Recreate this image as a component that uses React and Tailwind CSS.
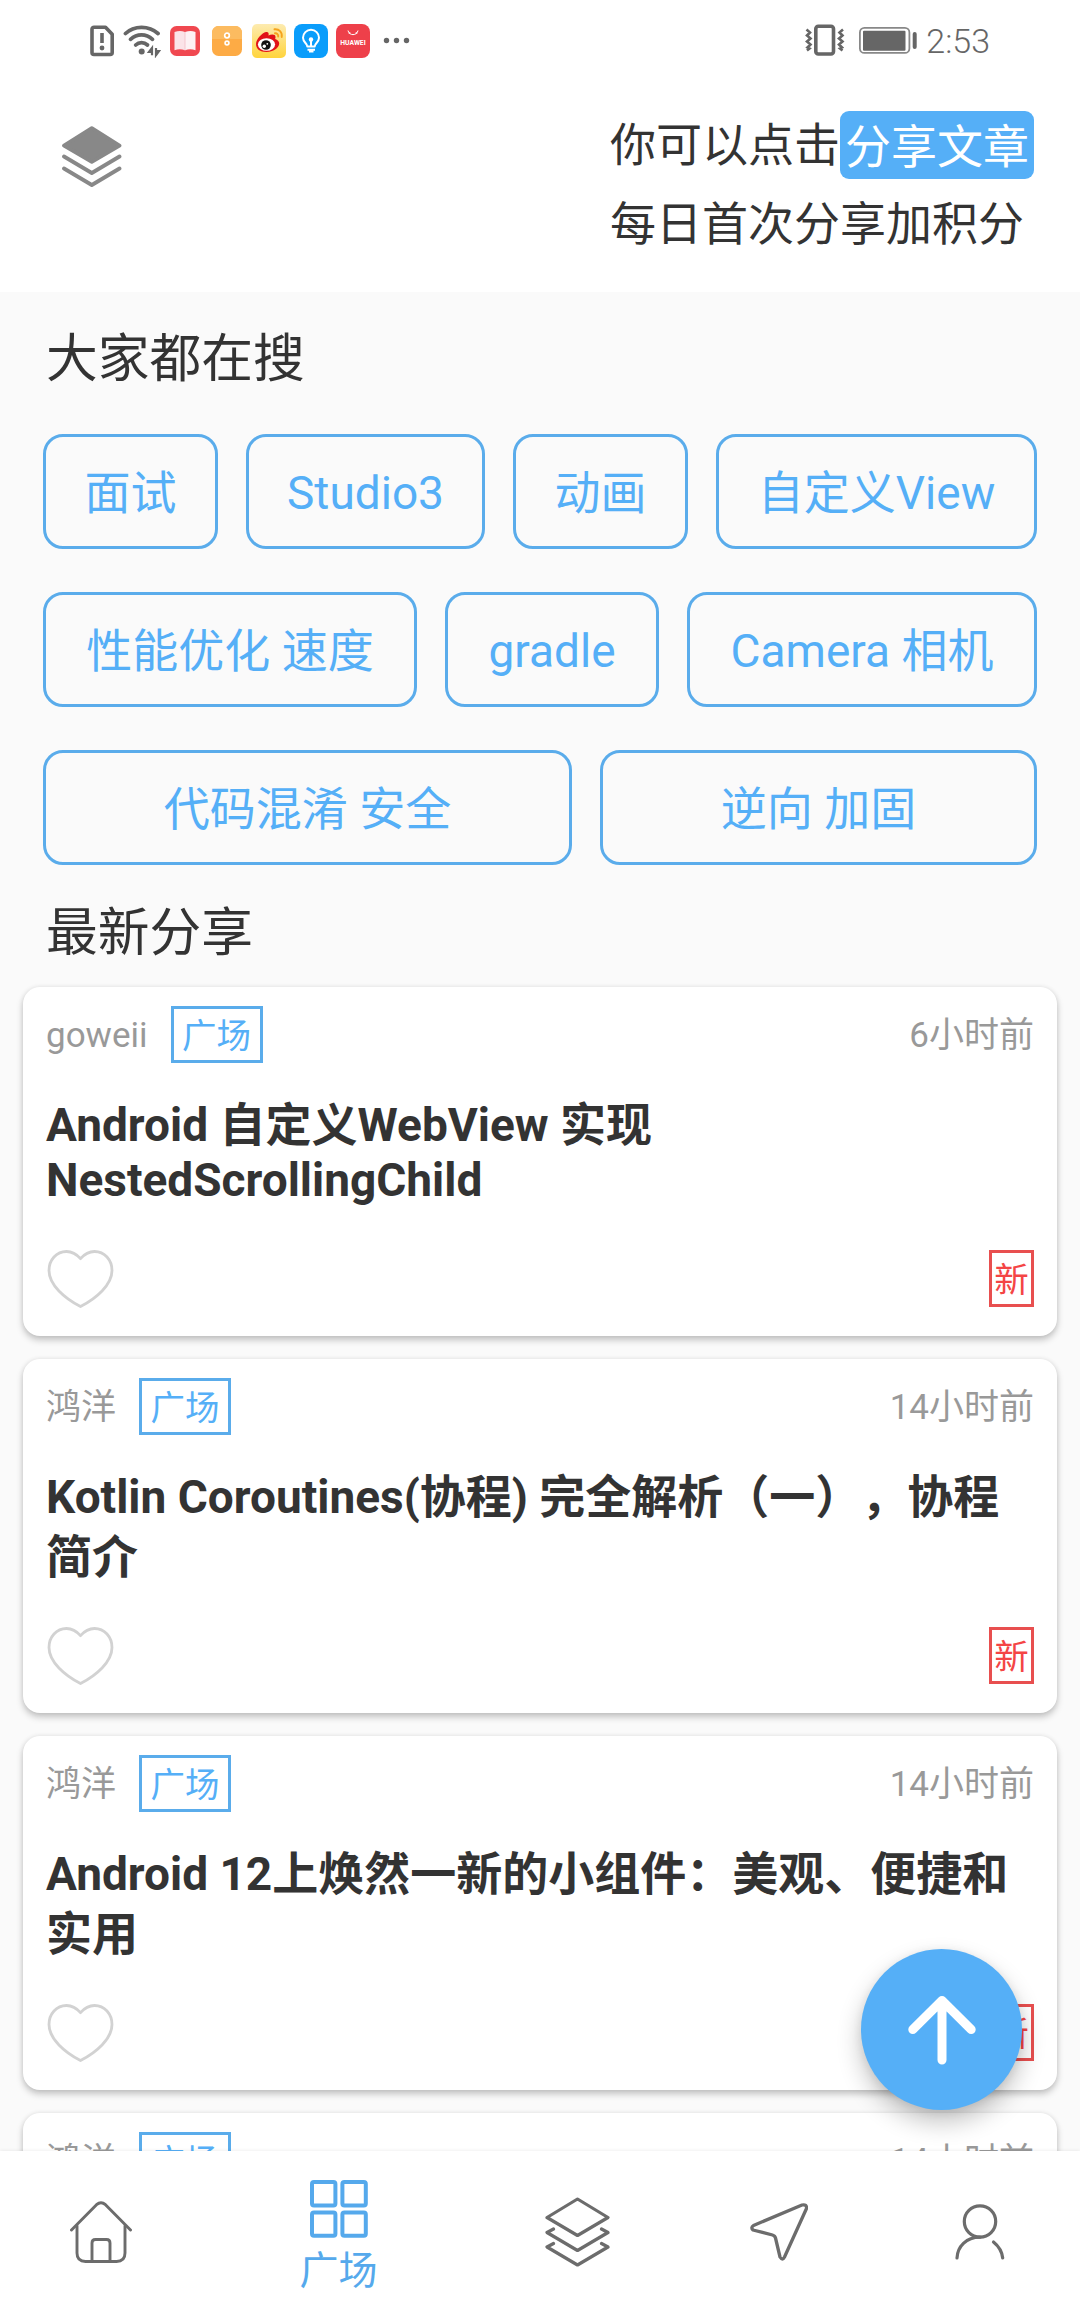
import clsx from "clsx";

const hotKeys = [
  [
    { name: '面试', width: 'w-[175px]' },
    { name: 'Studio3', width: 'w-[239px]' },
    { name: '动画', width: 'w-[175px]' },
    { name: '自定义View', width: 'w-[321px]' },
  ],
  [
    { name: '性能优化 速度', width: 'w-[374px]' },
    { name: 'gradle', width: 'w-[214px]' },
    { name: 'Camera 相机', width: 'w-[350px]' },
  ],
  [
    { name: '代码混淆 安全', width: 'w-[529px]' },
    { name: '逆向 加固', width: 'w-[437px]' },
  ],
];

const articles = [
  {
    id: 1,
    author: 'goweii',
    time: '6小时前',
    title: ['Android 自定义WebView 实现', 'NestedScrollingChild'],
    compact: true,
  },
  {
    id: 2,
    author: '鸿洋',
    time: '14小时前',
    title: ['Kotlin Coroutines(协程) 完全解析（一），协程', '简介'],
  },
  {
    id: 3,
    author: '鸿洋',
    time: '14小时前',
    title: ['Android 12上焕然一新的小组件：美观、便捷和', '实用'],
  },
  { id: 4, author: '鸿洋', time: '14小时前', title: ['', ''] },
];

const StatusBar = () => (
  <div className="flex h-20 shrink-0 items-start justify-between pl-[90px] pr-[90px] pt-6 text-[#666]">
    <div className="flex h-[34px] items-center">
      <svg className="h-[34px] w-6" viewBox="0 0 24 34" fill="none" stroke="currentColor" strokeWidth="3.6">
        <path d="M4 3.3h11.5l6.7 7v18.2a2 2 0 0 1-2 2H4a2 2 0 0 1-2-2V5.300a2 2 0 0 1 2-2z" strokeLinejoin="round" />
        <path d="M12 9v10" />
        <circle cx="12" cy="24" r="2.4" fill="currentColor" stroke="none" />
      </svg>
      <svg className="ml-[9px] h-[34px] w-[38px]" viewBox="0 0 38 34" fill="none" stroke="currentColor" strokeWidth="3.8" strokeLinecap="round">
        <path d="M2.500 9.500C11 1.300 26 1.300 35 9.500" />
        <path d="M7.500 15.300C14 9.500 23 9.500 29.500 15.300" />
        <path d="M12.700 21C16 17.800 21 17.800 24.500 21" />
        <circle cx="18.700" cy="27.500" r="3" fill="currentColor" stroke="none" />
        <path d="M29 24v7.200V24l-3 4h3M33 31.200V24v7.200l3-4H33" strokeWidth="2.200" />
      </svg>
      <svg className="ml-[9px] size-[30px]" viewBox="0 0 30 30">
        <rect width="30" height="30" rx="6.500" fill="#f04850" />
        <path d="M4.500 6c4-1.500 7-1.500 10.500 0v18.300c-3.500-1.500-7-1.500-10.500 0z" fill="#fbe3e8" />
        <path d="M15 6c4-1.500 7-1.500 10.500 0v18.300c-3.500-1.500-7-1.500-10.500 0z" fill="#fdf1f4" />
        <path d="M15 6v18.300" stroke="#f3bcc6" strokeWidth=".8" />
      </svg>
      <svg className="ml-3 size-[30px]" viewBox="0 0 30 30">
        <rect width="30" height="30" rx="6.500" fill="#fdab45" />
        <path d="M0 13V6.500A6.500 6.500 0 0 1 6.500 0h17A6.500 6.500 0 0 1 30 6.500V13z" fill="#fcbb60" />
        <circle cx="15" cy="9.500" r="2.300" fill="#fdab45" stroke="#fff" strokeWidth="1.700" />
        <circle cx="15" cy="17" r="1.900" fill="#fdab45" stroke="#fff" strokeWidth="1.700" />
      </svg>
      <svg className="ml-2.5 size-[34px]" viewBox="0 0 34 34">
        <defs>
          <linearGradient id="weibo" x1="0" y1="0" x2="0" y2="1">
            <stop offset="0" stopColor="#fdebb0" />
            <stop offset="1" stopColor="#ffd43c" />
          </linearGradient>
        </defs>
        <rect width="34" height="34" rx="5" fill="url(#weibo)" />
        <path d="M4 20c0-5 6-11 10-12 2.500-.4 3 1.500 2.500 3.500 3-1.500 7-1.500 7 1.500 0 1 -.3 1.500-.3 2 2.300.8 4 2.300 4 4.500C27 24 21 28 14.500 28S4 25 4 20z" fill="#e11218" />
        <ellipse cx="14.500" cy="20.500" rx="8.600" ry="6.300" fill="#fff" />
        <circle cx="14" cy="21" r="4.800" fill="#111" />
        <circle cx="12.300" cy="22.300" r="1.700" fill="#fff" />
        <circle cx="15.300" cy="19.800" r=".9" fill="#fff" />
        <path d="M22.500 5.300c4.500-.5 8 3 7.200 7.700M23 9.300c2-.2 3.500 1.300 3.200 3.300" fill="none" stroke="#f5a31c" strokeWidth="1.900" strokeLinecap="round" />
      </svg>
      <svg className="ml-2 size-[34px]" viewBox="0 0 34 34" fill="none" stroke="#fff" strokeWidth="2">
        <rect width="34" height="34" rx="8" fill="#0a9dfb" stroke="none" />
        <path d="M13.300 22.500c0-3-4.300-4.300-4.300-8.700a8 8 0 0 1 16 0c0 4.400-4.300 5.700-4.300 8.700z" strokeLinejoin="round" />
        <path d="M13.500 25.800h7.500M17 15v7" />
        <path d="M15 27.300h4.500" strokeWidth="2.400" />
        <circle cx="17" cy="15.500" r="2.200" fill="#fff" stroke="none" />
      </svg>
      <div className="ml-2 flex size-[34px] flex-col items-center rounded-[8px] bg-[#ee404a]">
        <svg className="mt-[6px] h-[6px] w-3" viewBox="0 0 12 6" fill="none" stroke="#fff" strokeWidth="1">
          <path d="M1 .5C2 6 10 6 11 .5M3 2l-1 2M9 2l1 2" />
        </svg>
        <span className="mt-[3px] text-[6.800px] leading-[9px] font-bold text-white">HUAWEI</span>
      </div>
      <svg className="ml-[13px] h-[34px] w-7" viewBox="0 0 28 34" fill="currentColor">
        <circle cx="3.500" cy="16.500" r="2.700" />
        <circle cx="13.500" cy="16.500" r="2.700" />
        <circle cx="23.500" cy="16.500" r="2.700" />
      </svg>
    </div>
    <div className="flex h-[34px] items-center">
      <svg className="h-[34px] w-10" viewBox="0 0 40 34" fill="none" stroke="currentColor">
        <rect x="10.800" y="2.300" width="17.700" height="27.700" rx="2.500" strokeWidth="3.600" />
        <path d="M1.500 5.500l3.500 3-3 3 3.500 3-3.500 3 3.500 3-3 3 2 1-2.500 2M38 5.500l-3.500 3 3 3-3.500 3 3.500 3-3.500 3 3 3-2 1 2.500 2" strokeWidth="2.600" />
      </svg>
      <svg className="ml-[14px] h-[34px] w-[59px]" viewBox="0 0 59 34" fill="none">
        <rect x=".9" y="3.900" width="49.500" height="25" rx="4.500" stroke="#888" strokeWidth="1.800" />
        <rect x="4" y="6.700" width="42.500" height="20" rx="1" fill="currentColor" />
        <rect x="53.700" y="8" width="4" height="17" rx="2" fill="currentColor" />
      </svg>
      <span className="ml-[8px] text-[34px] leading-[34px] font-light">2:53</span>
    </div>
  </div>
);

const Header = () => (
  <div className="flex h-[212px] shrink-0 items-start justify-between pl-[62px] pr-[46px]">
    <svg className="mt-[46px] h-[62px] w-[60px]" viewBox="0 0 60 62" fill="none" stroke="#888" strokeWidth="3.800" strokeLinecap="round" strokeLinejoin="round">
      <path d="M29.800 2.200L57.500 19.700 29.800 35.800 2 19.700z" fill="#888" />
      <path d="M2 30.500l27.800 16.500 27.700-16.500" />
      <path d="M2 42.500l27.800 16.500L57.500 42.500" />
    </svg>
    <div className="mt-[31px] text-[46px]">
      <div className="flex h-[68px] items-center leading-[68px]">
        <span>你可以点击</span>
        <span className="h-[68px] rounded-[9px] bg-[#55aff7] px-[5px] pt-[3px] leading-[66px] text-white">分享文章</span>
      </div>
      <div className="mt-[11px] h-[68px] leading-[68px]">每日首次分享加积分</div>
    </div>
  </div>
);

const ArticleCard = ({ article }) => (
  <div
    className={clsx(
      'flex shrink-0 flex-col rounded-[17px] bg-white px-[23px] pt-[19px] pb-7 shadow-[0_4px_7px_rgba(0,0,0,0.22),0_0_5px_rgba(0,0,0,0.08)]',
      article.compact ? 'h-[349px]' : 'h-[354px]'
    )}
  >
    <div className="flex h-[57px] items-center text-[35px] leading-[57px] text-[#999]">
      <span className="pt-[2px]">{article.author}</span>
      <span className="ml-[23px] h-[57px] w-[92px] border-[3px] border-[#5aaceb] pt-[2px] text-center text-[34.5px] leading-[51px] text-[#55aff7]">
        广场
      </span>
      <span className="ml-auto pt-[2px]">{article.time}</span>
    </div>
    <div
      className={clsx(
        'text-[46px] font-bold whitespace-nowrap',
        article.compact ? 'mt-[35px] leading-[55px]' : 'mt-8 leading-[60px]'
      )}
    >
      {article.title.map((line, i) => (
        <div key={i}>{line}</div>
      ))}
    </div>
    <div className="mt-auto flex items-start justify-between">
      <svg className="ml-[1px] h-[58px] w-[67px]" viewBox="0 0 67 58" fill="none" stroke="#d2d2d2" strokeWidth="2.800" strokeLinejoin="round">
        <path d="M33.500 8.700C29 3.500 24 1.500 19.500 1.500 9.500 1.500 2 10 2 20.500 2 35 18 48.500 33.500 56.500 49 48.500 65 35 65 20.500 65 10 57.500 1.500 47.500 1.500 43 1.500 38 3.500 33.500 8.700z" />
      </svg>
      <span className="h-[57px] w-[45px] border-[3px] border-[#e84f4f] pt-[2px] text-center text-[34.5px] leading-[51px] text-[#f44545]">
        <span className="-mx-1">新</span>
      </span>
    </div>
  </div>
);

const TabBar = () => (
  <div className="relative flex h-[161px] shrink-0 bg-white text-[#6c6c6c] shadow-[0_-1px_3px_rgba(0,0,0,0.06)]">
    <div className="flex w-[201px] items-center justify-center">
      <svg className="h-[62px] w-[62px]" viewBox="0 0 62 62" fill="none" stroke="currentColor" strokeWidth="2.900" strokeLinecap="round" strokeLinejoin="round">
        <path d="M1.500 29L26.500 3.700q4.500-4 9 0L60.500 29" />
        <path d="M7 25v27q0 8.500 8.500 8.500h31q8.500 0 8.500-8.500V25" />
        <path d="M22 60V42q0-3.500 3.500-3.500h11q3.500 0 3.500 3.500v18" />
      </svg>
    </div>
    <div className="flex w-[275px] flex-col items-center pt-[29px] text-[#55a9ec]">
      <svg className="h-[58px] w-[58px]" viewBox="0 0 58 58" fill="none" stroke="currentColor" strokeWidth="4">
        <rect x="2" y="2" width="23.400" height="23.400" rx="2" />
        <rect x="32.400" y="2" width="23.400" height="23.400" rx="2" />
        <rect x="2" y="32.400" width="23.400" height="23.400" rx="2" />
        <rect x="32.400" y="32.400" width="23.400" height="23.400" rx="2" />
      </svg>
      <span className="mt-[10px] text-[39px] leading-[46px]">广场</span>
    </div>
    <div className="flex w-[202px] items-center justify-center">
      <svg className="h-[70px] w-[65px]" viewBox="0 0 65 70" fill="none" stroke="currentColor" strokeWidth="3.200" strokeLinejoin="round" strokeLinecap="round">
        <path d="M32.500 2L63 20.500 32.500 38.500 2 20.500z" />
        <path d="M8.500 32L2 35.500l30.500 18L63 35.500l-6.500-3.500" />
        <path d="M8.500 46.500L2 50l30.500 18L63 50l-6.500-3.500" />
      </svg>
    </div>
    <div className="flex w-[201px] items-center justify-center">
      <svg className="h-[58px] w-[58px]" viewBox="0 0 58 58" fill="none" stroke="currentColor" strokeWidth="3.300" strokeLinejoin="round">
        <path d="M3.500 22.500L52 2q5-1 4.500 3.500L34.500 54q-2 4-4.500 0L25.500 35q-.5-2.300-3-3L3 27q-2.500-2.300.5-4.500z" />
      </svg>
    </div>
    <div className="flex w-[201px] items-center justify-center">
      <svg className="h-[56px] w-[50px]" viewBox="0 0 50 56" fill="none" stroke="currentColor" strokeWidth="3.200" strokeLinecap="round">
        <ellipse cx="25" cy="17.500" rx="15.700" ry="15.700" />
        <path d="M25 33.200C11 33.200 2.500 42.500 2 54M38.500 38C44 42.500 47 47.500 47.700 54" />
      </svg>
    </div>
  </div>
);

const App = () => {
  return (
    <div
      lang="zh-CN"
      className="flex h-[2312px] w-[1080px] flex-col overflow-hidden bg-white font-['Roboto','Noto_Sans_CJK_SC',sans-serif] text-[#333] [text-spacing-trim:space-all]"
    >
      <StatusBar />
      <Header />
      <div className="relative flex min-h-0 flex-1 flex-col overflow-hidden bg-[#fafafa]">
        <h2 className="mt-[38px] ml-[46px] shrink-0 text-[51.75px] leading-[60px]">大家都在搜</h2>
        <div className="mx-[43px] mt-[44px] flex shrink-0 flex-col gap-[43px]">
          {hotKeys.map((row, i) => (
            <div key={i} className="flex justify-between">
              {row.map((key) => (
                <button
                  key={key.name}
                  className={clsx(
                    'h-[115px] rounded-[20px] border-[3px] border-[#5aaceb] pt-[3px] text-[46px] leading-[60px] whitespace-nowrap text-[#55aff7]',
                    key.width
                  )}
                >
                  {key.name}
                </button>
              ))}
            </div>
          ))}
        </div>
        <h2 className="mt-[39px] ml-[46px] shrink-0 text-[51.75px] leading-[60px]">最新分享</h2>
        <div className="mx-[23px] mt-[23px] flex flex-col gap-[23px]">
          {articles.map((article) => (
            <ArticleCard key={article.id} article={article} />
          ))}
        </div>
        {/* back to top */}
        <button className="absolute right-[58px] bottom-[41px] flex size-[161px] items-center justify-center rounded-full bg-[#55aff7] shadow-[0_12px_24px_rgba(0,0,0,0.24),0_2px_10px_rgba(0,0,0,0.08)]">
          <svg className="h-[70px] w-[68px]" viewBox="0 0 68 70" fill="none" stroke="#fff" strokeWidth="9" strokeLinecap="round" strokeLinejoin="round">
            <path d="M34 65V5.500M4.800 34.500L34 5.500l29.200 29" />
          </svg>
        </button>
      </div>
      <TabBar />
    </div>
  );
};

export default App;
